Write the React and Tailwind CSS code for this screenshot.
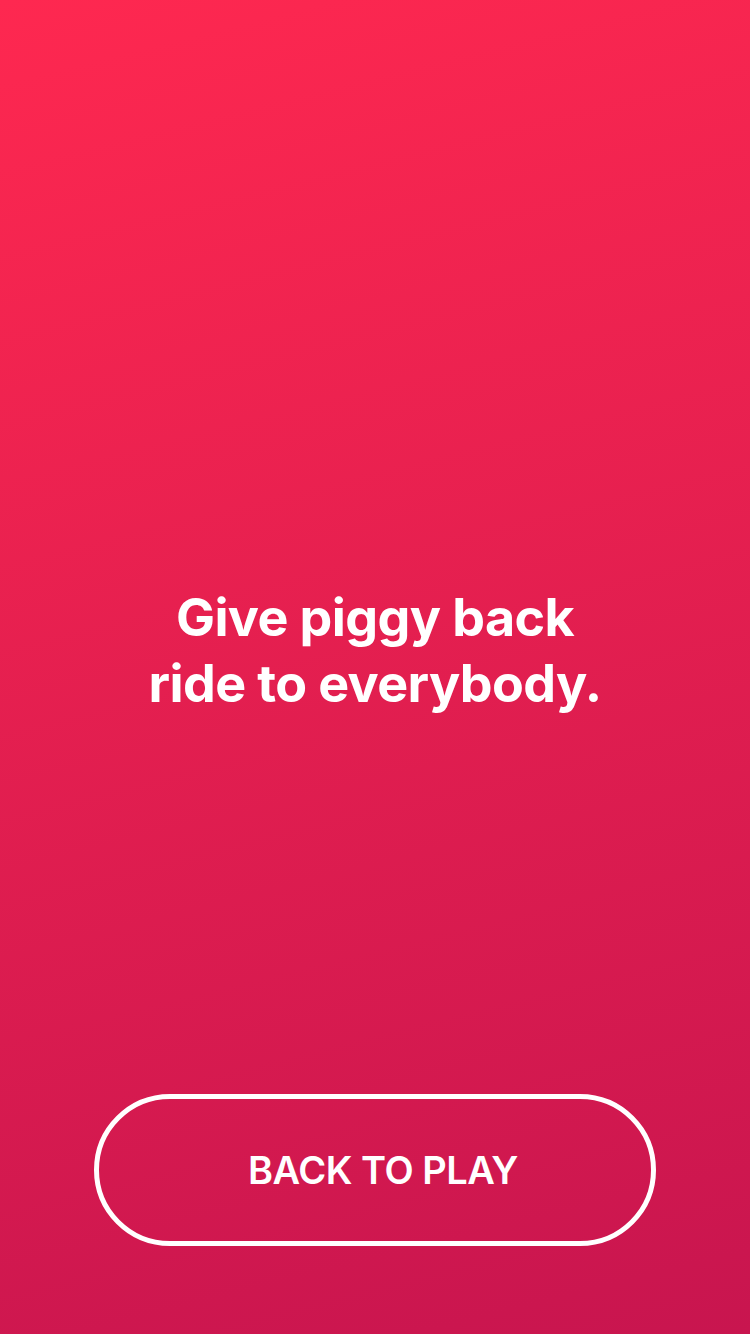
import React from 'react';

export default function App() {
  return (
    <div
      className="w-[750px] h-[1334px] flex flex-col items-center bg-[linear-gradient(166deg,#fe2850_0%,#c8154f_100%)] text-white"
      style={{ fontFamily: 'Inter, "Noto Sans", sans-serif' }}
    >
      <div className="pt-[585px] flex-1">
        <h1 className="text-[52px] leading-[66px] font-bold text-center tracking-[-0.6px]">
          Give piggy back
          <br />
          ride to everybody.
        </h1>
      </div>

      <button className="mb-[88px] w-[562px] h-[152px] rounded-full border-[5px] border-white flex items-center justify-center pl-[16px]">
        <span className="text-[38px] font-semibold tracking-[-0.5px]">BACK TO PLAY</span>
      </button>
    </div>
  );
}
